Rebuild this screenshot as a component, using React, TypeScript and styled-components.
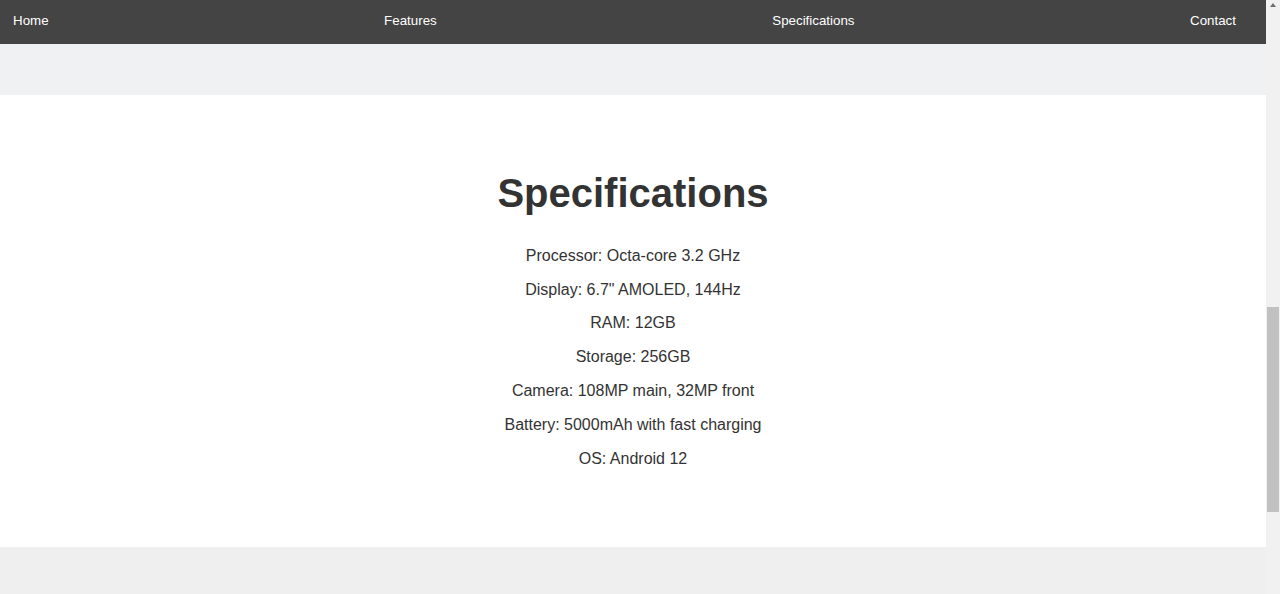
import React from "react";
import styled, { createGlobalStyle } from "styled-components";

const GlobalStyle = createGlobalStyle`
  html, body {
    margin: 0;
    padding: 0;
    height: 100%;
    overflow: hidden;
  }
  body {
    font-family: "Liberation Sans", Arial, sans-serif;
    color: #333;
  }
  #root { height: 100%; }
  * { box-sizing: border-box; }
`;

const Frame = styled.div`
  height: 100vh;
  display: flex;
  background: #efefef;
`;

const Main = styled.div`
  flex: 1;
  min-width: 0;
  display: flex;
  flex-direction: column;
`;

const Nav = styled.nav`
  height: 44px;
  flex-shrink: 0;
  background: #444444;
  display: flex;
  justify-content: space-between;
  align-items: center;
  padding: 0 30px 3px 13px;
`;

const NavLink = styled.a`
  color: #ffffff;
  text-decoration: none;
  font-size: 13.33px;
  line-height: 16px;
`;

const Strip = styled.div`
  height: 51px;
  flex-shrink: 0;
  background: #f0f1f3;
`;

const Specs = styled.section`
  background: #ffffff;
  height: 452px;
  flex-shrink: 0;
  padding: 75px 0 0;
  display: flex;
  flex-direction: column;
  align-items: center;
`;

const SectionTitle = styled.h2`
  margin: 0;
  font-size: 40px;
  line-height: 46px;
  font-weight: 700;
  color: #333333;
`;

const SpecList = styled.ul`
  list-style: none;
  margin: 23px 0 0;
  padding: 0;
  text-align: center;
`;

const SpecItem = styled.li`
  font-size: 16px;
  line-height: 18px;
  padding: 7.9px 0;
  color: #333333;
`;

const Contact = styled.section`
  flex: 1;
  background: #efefef;
`;

const Rail = styled.div`
  width: 14px;
  flex-shrink: 0;
  background: #f1f1f1;
  display: flex;
  flex-direction: column;
  align-items: flex-start;
`;

const ArrowUp = styled.div`
  width: 14px;
  height: 14px;
  display: flex;
  justify-content: center;
  padding-top: 3px;

  &::before {
    content: "";
    width: 0;
    height: 0;
    border-left: 3.5px solid transparent;
    border-right: 3.5px solid transparent;
    border-bottom: 4px solid #6e6e6e;
  }
`;

const Thumb = styled.div<{ $offset: number; $size: number }>`
  margin-top: ${(p) => p.$offset}px;
  margin-left: 1px;
  width: 12px;
  height: ${(p) => p.$size}px;
  background: #c1c1c1;
`;

const specs = [
  "Processor: Octa-core 3.2 GHz",
  'Display: 6.7" AMOLED, 144Hz',
  "RAM: 12GB",
  "Storage: 256GB",
  "Camera: 108MP main, 32MP front",
  "Battery: 5000mAh with fast charging",
  "OS: Android 12",
];

export default function App() {
  return (
    <>
      <GlobalStyle />
      <Frame>
        <Main>
          <Nav>
            <NavLink href="#home">Home</NavLink>
            <NavLink href="#features">Features</NavLink>
            <NavLink href="#specs">Specifications</NavLink>
            <NavLink href="#contact">Contact</NavLink>
          </Nav>
          <Strip />
          <Specs id="specs">
            <SectionTitle>Specifications</SectionTitle>
            <SpecList>
              {specs.map((s) => (
                <SpecItem key={s}>{s}</SpecItem>
              ))}
            </SpecList>
          </Specs>
          <Contact id="contact" />
        </Main>
        <Rail>
          <ArrowUp />
          <Thumb $offset={293} $size={205} />
        </Rail>
      </Frame>
    </>
  );
}
